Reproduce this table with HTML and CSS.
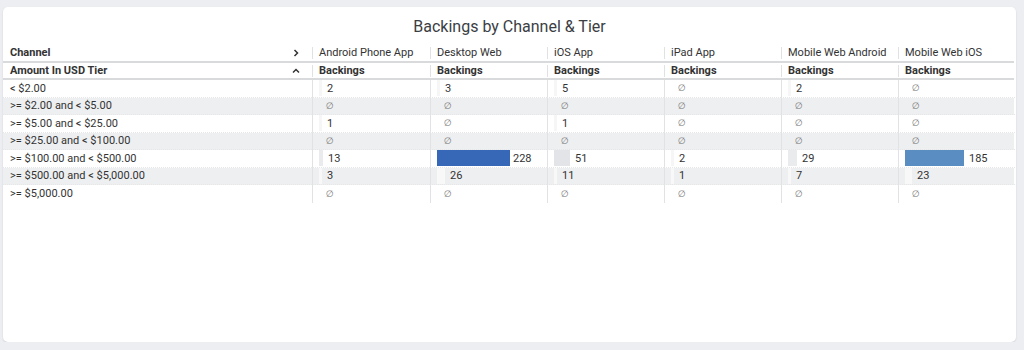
FILE: index.html
```html
<!DOCTYPE html>
<html>
<head>
<meta charset="utf-8">
<link rel="stylesheet" href="styles.css">
</head>
<body>
<div class="card">
  <div class="title">Backings by Channel &amp; Tier</div>
  <div class="table">
    <div class="hrow h1">
      <div class="hcell first"><span class="lbl">Channel</span>
        <svg class="chev" width="8" height="8" viewBox="0 0 8 8"><path d="M2.5 1 L5.5 4 L2.5 7" fill="none" stroke="#333" stroke-width="1.5"/></svg>
      </div>
      <div class="hcell">Android Phone App</div>
      <div class="hcell">Desktop Web</div>
      <div class="hcell">iOS App</div>
      <div class="hcell">iPad App</div>
      <div class="hcell">Mobile Web Android</div>
      <div class="hcell">Mobile Web iOS</div>
    </div>
    <div class="hrow h2">
      <div class="hcell first bold"><span class="lbl">Amount In USD Tier</span>
        <svg class="chev up" width="8" height="8" viewBox="0 0 8 8"><path d="M1 5.5 L4 2.5 L7 5.5" fill="none" stroke="#333" stroke-width="1.5"/></svg>
      </div>
      <div class="hcell bold">Backings</div>
      <div class="hcell bold">Backings</div>
      <div class="hcell bold">Backings</div>
      <div class="hcell bold">Backings</div>
      <div class="hcell bold">Backings</div>
      <div class="hcell bold">Backings</div>
    </div>

    <div class="row">
      <div class="rcell">&lt; $2.00</div>
      <div class="vcell"><span class="bar tiny" style="width:3px"></span><span class="num">2</span></div>
      <div class="vcell"><span class="bar tiny" style="width:3px"></span><span class="num">3</span></div>
      <div class="vcell"><span class="bar tiny" style="width:3px"></span><span class="num">5</span></div>
      <div class="vcell"><span class="null">∅</span></div>
      <div class="vcell"><span class="bar tiny" style="width:3px"></span><span class="num">2</span></div>
      <div class="vcell"><span class="null">∅</span></div>
    </div>
    <div class="row alt">
      <div class="rcell">&gt;= $2.00 and &lt; $5.00</div>
      <div class="vcell"><span class="null">∅</span></div>
      <div class="vcell"><span class="null">∅</span></div>
      <div class="vcell"><span class="null">∅</span></div>
      <div class="vcell"><span class="null">∅</span></div>
      <div class="vcell"><span class="null">∅</span></div>
      <div class="vcell"><span class="null">∅</span></div>
    </div>
    <div class="row">
      <div class="rcell">&gt;= $5.00 and &lt; $25.00</div>
      <div class="vcell"><span class="bar tiny" style="width:3px"></span><span class="num">1</span></div>
      <div class="vcell"><span class="null">∅</span></div>
      <div class="vcell"><span class="bar tiny" style="width:3px"></span><span class="num">1</span></div>
      <div class="vcell"><span class="null">∅</span></div>
      <div class="vcell"><span class="null">∅</span></div>
      <div class="vcell"><span class="null">∅</span></div>
    </div>
    <div class="row alt">
      <div class="rcell">&gt;= $25.00 and &lt; $100.00</div>
      <div class="vcell"><span class="null">∅</span></div>
      <div class="vcell"><span class="null">∅</span></div>
      <div class="vcell"><span class="null">∅</span></div>
      <div class="vcell"><span class="null">∅</span></div>
      <div class="vcell"><span class="null">∅</span></div>
      <div class="vcell"><span class="null">∅</span></div>
    </div>
    <div class="row">
      <div class="rcell">&gt;= $100.00 and &lt; $500.00</div>
      <div class="vcell"><span class="bar lo" style="width:4px"></span><span class="num">13</span></div>
      <div class="vcell"><span class="bar max" style="width:73px"></span><span class="num tight">228</span></div>
      <div class="vcell"><span class="bar mid" style="width:16px"></span><span class="num">51</span></div>
      <div class="vcell"><span class="bar tiny" style="width:3px"></span><span class="num">2</span></div>
      <div class="vcell"><span class="bar lo" style="width:9px"></span><span class="num">29</span></div>
      <div class="vcell"><span class="bar high" style="width:59px"></span><span class="num">185</span></div>
    </div>
    <div class="row alt">
      <div class="rcell">&gt;= $500.00 and &lt; $5,000.00</div>
      <div class="vcell"><span class="bar pale" style="width:3px"></span><span class="num">3</span></div>
      <div class="vcell"><span class="bar pale" style="width:8px"></span><span class="num">26</span></div>
      <div class="vcell"><span class="bar pale" style="width:3px"></span><span class="num">11</span></div>
      <div class="vcell"><span class="bar pale" style="width:3px"></span><span class="num">1</span></div>
      <div class="vcell"><span class="bar pale" style="width:3px"></span><span class="num">7</span></div>
      <div class="vcell"><span class="bar pale" style="width:7px"></span><span class="num">23</span></div>
    </div>
    <div class="row last">
      <div class="rcell">&gt;= $5,000.00</div>
      <div class="vcell"><span class="null">∅</span></div>
      <div class="vcell"><span class="null">∅</span></div>
      <div class="vcell"><span class="null">∅</span></div>
      <div class="vcell"><span class="null">∅</span></div>
      <div class="vcell"><span class="null">∅</span></div>
      <div class="vcell"><span class="null">∅</span></div>
    </div>
  </div>
</div>
</body>
</html>
```

FILE: styles.css
```css
html, body {
  margin: 0;
  padding: 0;
  background: #eceef1;
  font-family: Roboto, "Liberation Sans", Arial, sans-serif;
  color: #333;
}
.card {
  margin: 7px 0 0 3px;
  width: 1013px;
  height: 335px;
  background: #fff;
  border-radius: 5px;
  box-shadow: 0 1px 2px rgba(0,0,0,0.12);
  overflow: hidden;
}
.title {
  height: 37px;
  display: flex;
  align-items: center;
  justify-content: center;
  padding-top: 1px;
  box-sizing: border-box;
  font-size: 16px;
  color: #3b3e43;
}
.table {
  width: 1011px;
  font-size: 11px;
}
.hrow, .row {
  display: grid;
  grid-template-columns: 309px 118px repeat(5, 117px);
}
.hrow.h1 {
  height: 17px;
  border-bottom: 2px solid #d9dadc;
}
.hrow.h2 {
  height: 15px;
  border-bottom: 2px solid #d9dadc;
}
.hcell {
  display: flex;
  align-items: center;
  white-space: nowrap;
  color: #333;
}
.hcell::before {
  content: "";
  width: 1px;
  height: 12px;
  background: #e0e1e3;
  margin-right: 6px;
  flex: none;
}
.hcell.first::before {
  display: none;
}
.hcell.first {
  padding-left: 7px;
  padding-right: 12px;
  font-weight: bold;
  justify-content: space-between;
}
.hcell.bold {
  font-weight: bold;
}
.chev {
  display: block;
}
.row {
  height: 17.5px;
}
.row.alt {
  background: #eeeff1;
}
.rcell {
  display: flex;
  align-items: center;
  padding-left: 7px;
  white-space: nowrap;
  color: #333;
  border-bottom: 1px dotted #e6e7e9;
  box-sizing: border-box;
}
.vcell {
  display: flex;
  align-items: center;
  padding-left: 6px;
  border-left: 1px solid #e1e2e4;
  border-bottom: 1px dotted #e6e7e9;
  box-sizing: border-box;
  white-space: nowrap;
}
.row.last .rcell,
.row.last .vcell {
  border-bottom: none;
}
.bar {
  display: block;
  height: 16px;
  flex: none;
}
.bar.tiny { background: #f6f6f7; }
.bar.lo { background: #eaebed; }
.bar.pale { background: #f8f8f9; }
.bar.mid { background: #e2e4e7; }
.bar.high { background: #5a8ec2; }
.bar.max { background: #3767b7; }
.num {
  margin-left: 5px;
  color: #333;
}
.num.tight {
  margin-left: 3px;
}
.null {
  margin-left: 7px;
  font-family: "DejaVu Sans", sans-serif;
  font-size: 9px;
  color: #777;
}
```
